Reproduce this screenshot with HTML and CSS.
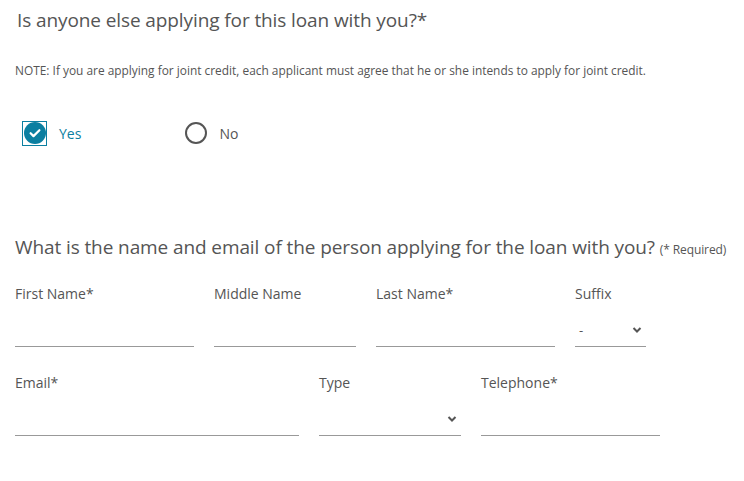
FILE: index.html
```html
<!DOCTYPE html>
<html>
<head>
<meta charset="utf-8">
<link rel="stylesheet" href="styles.css">
</head>
<body>
<div class="page">
  <h1 class="q-title">Is anyone else applying for this loan with you?*</h1>
  <p class="note">NOTE: If you are applying for joint credit, each applicant must agree that he or she intends to apply for joint credit.</p>
  <div class="choices">
    <label class="choice choice-yes">
      <span class="focus-box">
        <svg class="check" width="22" height="22" viewBox="0 0 22 22"><circle cx="11" cy="11" r="11" fill="#0b7fa1"/><path d="M6.6 11.2l2.9 2.9 5.9-5.9" fill="none" stroke="#fff" stroke-width="2.2" stroke-linecap="round" stroke-linejoin="round"/></svg>
      </span>
      <span class="choice-text yes">Yes</span>
    </label>
    <label class="choice choice-no">
      <svg class="radio" width="24" height="24" viewBox="0 0 24 24"><circle cx="12" cy="12" r="10" fill="none" stroke="#555" stroke-width="2"/></svg>
      <span class="choice-text">No</span>
    </label>
  </div>
  <h2 class="q-title second">What is the name and email of the person applying for the loan with you? <span class="req">(* Required)</span></h2>
  <div class="row">
    <div class="field w179"><span class="lbl">First Name*</span><div class="line"></div></div>
    <div class="field w142"><span class="lbl">Middle Name</span><div class="line"></div></div>
    <div class="field w179"><span class="lbl">Last Name*</span><div class="line"></div></div>
    <div class="field w71"><span class="lbl">Suffix</span><div class="line sel"><span class="val">-</span><svg class="chev" width="10" height="8" viewBox="0 0 10 8"><path d="M1.5 2l3.5 3.5L8.5 2" fill="none" stroke="#555" stroke-width="2"/></svg></div></div>
  </div>
  <div class="row row2">
    <div class="field w284"><span class="lbl">Email*</span><div class="line"></div></div>
    <div class="field w142"><span class="lbl">Type</span><div class="line sel"><span class="val"></span><svg class="chev" width="10" height="8" viewBox="0 0 10 8"><path d="M1.5 2l3.5 3.5L8.5 2" fill="none" stroke="#555" stroke-width="2"/></svg></div></div>
    <div class="field w179"><span class="lbl">Telephone*</span><div class="line"></div></div>
  </div>
</div>
</body>
</html>
```
FILE: styles.css
```css
* { box-sizing: border-box; }
html, body { margin: 0; padding: 0; background: #fff; }
body { font-family: "Open Sans", "Noto Sans", sans-serif; color: #555; }
.page { padding: 0 0 0 15px; }
.q-title { font-weight: 400; font-size: 19px; line-height: 26px; margin: 0; color: #555; letter-spacing: -0.1px; }
h1.q-title { padding: 7px 0 0 2px; }
.note { font-size: 11.9px; margin: 29px 0 0 0; line-height: 16px; color: #555; }
.choices { display: flex; margin-top: 42px; padding-left: 7px; height: 26px; align-items: center; }
.choice { display: flex; align-items: center; }
.focus-box { width: 25px; height: 25px; border: 1px solid #0b7fa1; display: flex; align-items: center; justify-content: center; }
.choice-text { font-size: 14px; margin-left: 12px; }
.choice-text.yes { color: #0b7fa1; }
.choice-no { margin-left: 103px; }
.choice-no .choice-text { margin-left: 11px; }
.second { margin-top: 88px; }
.req { font-size: 12px; }
.row { display: flex; gap: 20px; margin-top: 21px; }
.row2 { margin-top: 26px; }
.field { display: flex; flex-direction: column; }
.lbl { font-size: 14px; line-height: 20px; }
.line { height: 43px; border-bottom: 1px solid #999; display: flex; align-items: center; justify-content: space-between; padding: 10px 4px 0 4px; }
.w179 { width: 179px; }
.w142 { width: 142px; }
.w71 { width: 71px; }
.w284 { width: 284px; }
.val { font-size: 13px; }
```
